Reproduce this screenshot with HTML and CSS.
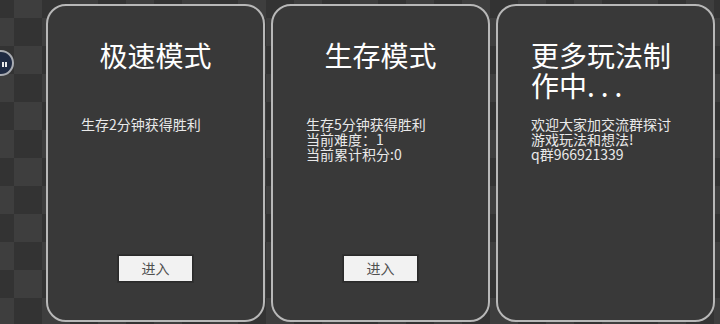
FILE: index.html
```html
<!DOCTYPE html>
<html lang="zh-CN">
<head>
<meta charset="utf-8">
<title>模式选择</title>
<link rel="stylesheet" href="styles.css">
</head>
<body>
<div class="stage">
  <div class="float-btn"><span class="bar"></span><span class="bar"></span></div>
  <div class="cards">
    <section class="card">
      <h2 class="title">极速模式</h2>
      <div class="desc">
        <p>生存2分钟获得胜利</p>
      </div>
      <button class="enter">进入</button>
    </section>
    <section class="card">
      <h2 class="title">生存模式</h2>
      <div class="desc">
        <p>生存5分钟获得胜利</p>
        <p>当前难度：1</p>
        <p>当前累计积分:0</p>
      </div>
      <button class="enter">进入</button>
    </section>
    <section class="card">
      <h2 class="title">更多玩法制作中<span class="dots">...</span></h2>
      <div class="desc">
        <p>欢迎大家加交流群探讨</p>
        <p>游戏玩法和想法!</p>
        <p>q群966921339</p>
      </div>
    </section>
  </div>
</div>
</body>
</html>
```

FILE: styles.css
```css
* { box-sizing: border-box; }

html, body {
  margin: 0;
  padding: 0;
  width: 720px;
  height: 324px;
  overflow: hidden;
}

body {
  font-family: "Noto Sans CJK SC", "Noto Sans", sans-serif;
  background-color: #333333;
  background-image:
    conic-gradient(#3e3e3e 0 25%, #333333 0 50%, #3e3e3e 0 75%, #333333 0);
  background-size: 56px 56px;
  background-position: -14px -10px;
}

.stage {
  position: relative;
  width: 720px;
  height: 324px;
}

.float-btn {
  position: absolute;
  left: -12px;
  top: 50px;
  width: 26px;
  height: 26px;
  border-radius: 50%;
  background: #1f2a42;
  border: 2px solid #a9acb2;
  display: flex;
  justify-content: flex-end;
  align-items: center;
  gap: 1px;
  padding-right: 5px;
}

.float-btn .bar {
  width: 2px;
  height: 5px;
  background: #e8e8e8;
  margin-top: 3px;
}

.cards {
  display: flex;
  gap: 6px;
  padding: 4px 0 0 46px;
}

.card {
  width: 219px;
  height: 318px;
  flex: none;
  border: 2px solid #b8b8b8;
  border-radius: 20px;
  background: #393939;
  padding: 34px 33px 38px;
  display: flex;
  flex-direction: column;
}

.title {
  margin: 0 auto;
  width: fit-content;
  min-height: 60px;
  font-size: 28px;
  line-height: 30px;
  font-weight: normal;
  color: #ffffff;
  text-align: left;
}

.dots {
  letter-spacing: 6px;
}

.desc {
  margin-top: 17px;
  color: #e9e9e9;
  font-size: 14px;
  line-height: 15px;
}

.desc p {
  margin: 0;
  white-space: nowrap;
}

.enter {
  margin-top: auto;
  align-self: center;
  width: 75px;
  height: 27px;
  padding: 0;
  border: 1px solid #2a2a2a;
  background: #f2f2f2;
  color: #505050;
  font-family: "Noto Sans CJK SC", "Noto Sans", sans-serif;
  font-size: 14px;
  line-height: 25px;
  box-shadow: 0 0 0 1px #303030;
}
```
